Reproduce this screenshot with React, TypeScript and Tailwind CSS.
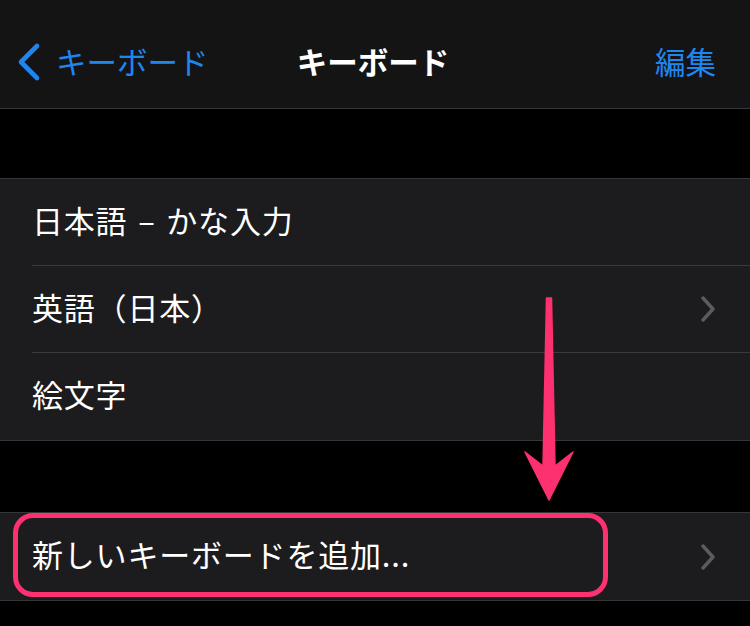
import React from "react";

const font = { fontFamily: '"Noto Sans CJK JP", "Noto Sans", sans-serif' };

function Chevron() {
  return (
    <svg width="16" height="26" viewBox="0 0 16 26" className="shrink-0">
      <path d="M3 2 L13 13 L3 24" fill="none" stroke="#5c5c60" strokeWidth="3.4" strokeLinecap="round" strokeLinejoin="round" />
    </svg>
  );
}

function Row({ label, chevron, last }: { label: string; chevron?: boolean; last?: boolean }) {
  return (
    <div className="pl-[32px] h-[87px]">
      <div className={`h-full flex items-center pr-[34px] ${last ? "" : "border-b border-[#3a3a3d]"}`}>
        <span className="flex-1 text-[31px] text-white leading-none pb-[6px] tracking-[0.8px] [word-spacing:3px]">{label}</span>
        {chevron && <Chevron />}
      </div>
    </div>
  );
}

export default function App() {
  return (
    <div className="relative w-[750px] h-[626px] bg-black overflow-hidden" style={font}>
      <div className="h-[109px] bg-[#141414] border-b border-[#363638] pt-[18px]">
        <div className="h-[88px] grid grid-cols-[1fr_auto_1fr] items-center px-[16px]">
          <div className="flex items-center gap-[14px] text-[#1f86f0]">
            <svg width="26" height="40" viewBox="0 0 26 40">
              <path d="M21 4 L5 20 L21 36" fill="none" stroke="#1f86f0" strokeWidth="4.6" strokeLinecap="round" strokeLinejoin="round" />
            </svg>
            <span className="text-[30.5px] leading-none pb-[2px]">キーボード</span>
          </div>
          <span className="text-[30.5px] leading-none font-bold text-white pb-[2px] mr-[4px]">キーボード</span>
          <div className="flex justify-end">
            <span className="text-[30.5px] leading-none text-[#1f86f0] mr-[18px] pb-[2px]">編集</span>
          </div>
        </div>
      </div>
      <div className="h-[69px]" />
      <div className="bg-[#1c1c1e] border-y border-[#363638]">
        <Row label="日本語 – かな入力" />
        <Row label="英語（日本）" chevron />
        <Row label="絵文字" last />
      </div>
      <div className="h-[71px]" />
      <div className="bg-[#1c1c1e] border-y border-[#363638] relative">
        <Row label="新しいキーボードを追加..." chevron last />
        <div className="absolute left-[13px] top-[0px] w-[595px] h-[84px] border-[5px] border-[#fd3070] rounded-[20px]" />
      </div>
      <svg className="absolute left-0 top-0" width="750" height="626" viewBox="0 0 750 626">
        <polygon points="546.5,298 551.5,298 555,466 573,452 549,500 525,452 543,466" fill="#fd3070" strokeLinejoin="round" stroke="#fd3070" strokeWidth="1.5" />
      </svg>
    </div>
  );
}
